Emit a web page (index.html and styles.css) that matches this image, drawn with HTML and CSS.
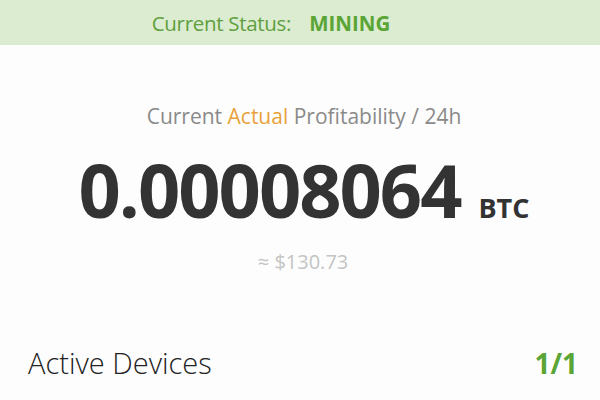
FILE: index.html
```html
<!DOCTYPE html>
<html>
<head>
<meta charset="utf-8">
<link rel="stylesheet" href="styles.css">
</head>
<body>
<div class="status-bar">
  <span class="status-label">Current Status:</span>
  <span class="status-value">MINING</span>
</div>
<main class="content">
  <div class="profit-title">Current <span class="accent">Actual</span> Profitability / 24h</div>
  <div class="amount-row">
    <span class="amount">0.00008064</span>
    <span class="unit">BTC</span>
  </div>
  <div class="fiat">≈ $130.73</div>
</main>
<div class="devices-row">
  <span class="devices-label">Active Devices</span>
  <span class="devices-value">1/1</span>
</div>
</body>
</html>
```

FILE: styles.css
```css
html, body {
  margin: 0;
  padding: 0;
  width: 600px;
  height: 400px;
  overflow: hidden;
  background: #fdfdfd;
  font-family: "Open Sans", "Noto Sans", sans-serif;
}
.status-bar {
  height: 45px;
  background: #dbecd0;
  display: flex;
  align-items: center;
  justify-content: center;
  gap: 18px;
  font-size: 20.5px;
  color: #5f9f3e;
  padding-right: 58px;
}
.status-label {
  letter-spacing: -0.3px;
}
.status-value {
  font-weight: 700;
  color: #5aa535;
}
.content {
  display: flex;
  flex-direction: column;
  align-items: center;
}
.profit-title {
  margin-top: 57px;
  font-size: 21px;
  color: #8a8a8a;
  line-height: 28px;
  margin-left: 8px;
}
.accent {
  color: #e9a23b;
}
.amount-row {
  margin-top: 18px;
  display: flex;
  align-items: baseline;
  gap: 18px;
  margin-left: 8px;
}
.amount {
  font-size: 74px;
  font-weight: 700;
  color: #333333;
  line-height: 84px;
  letter-spacing: -2px;
}
.unit {
  font-size: 27px;
  font-weight: 700;
  color: #333333;
}
.fiat {
  margin-top: 16px;
  font-size: 20px;
  color: #c4c4c4;
  margin-left: 6px;
}
.devices-row {
  position: absolute;
  left: 0;
  right: 0;
  top: 343px;
  display: flex;
  justify-content: space-between;
  align-items: center;
  padding: 0 22px 0 28px;
}
.devices-label {
  font-size: 29px;
  font-weight: 300;
  color: #222;
}
.devices-value {
  font-size: 28px;
  font-weight: 700;
  color: #5aa535;
}
```
